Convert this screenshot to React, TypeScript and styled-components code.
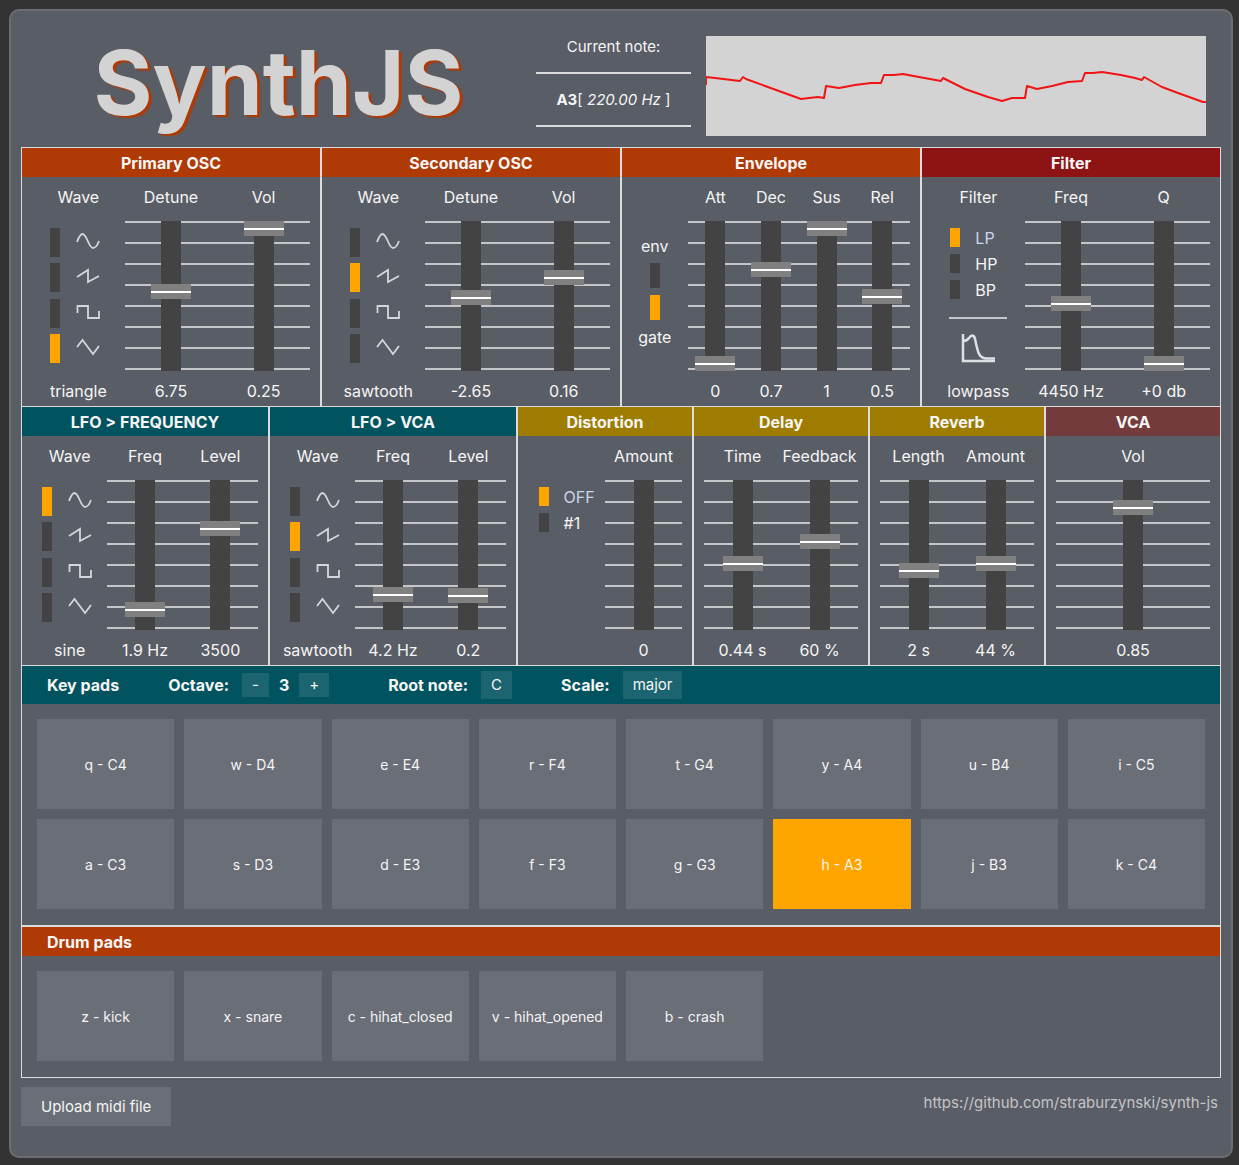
import React, { useId, useState } from "react";
import styled, { createGlobalStyle } from "styled-components";

const color = {
  page: "#333333",
  chassis: "#595d65",
  chassisEdge: "#6b6d70",
  line: "#dcdcdc",
  tick: "#c4c6c9",
  dark: "#434343",
  thumb: "#808080",
  lit: "#ffa500",
  pad: "#6a6e76",
  text: "#f5f5f5",
  muted: "#c3c4c6",
  litText: "#c9d6ec",
  orange: "#af3a05",
  red: "#8e1315",
  teal: "#00535f",
  tealButton: "#1c6570",
  gold: "#9e7c00",
  maroon: "#733b3b",
};

const GlobalStyle = createGlobalStyle`
  *, *::before, *::after { box-sizing: border-box; }
  body {
    margin: 0;
    background: ${color.page};
    color: ${color.text};
    font-family: Inter, "Noto Sans", sans-serif;
    font-size: 16px;
    line-height: 24px;
  }
  button {
    border: 0;
    margin: 0;
    font: inherit;
    color: inherit;
    cursor: pointer;
  }
`;

const Page = styled.div`
  padding: 9px 6px 7px 9px;
`;

const Chassis = styled.main`
  padding: 10px 10px 30px;
  background: ${color.chassis};
  border: 2px solid ${color.chassisEdge};
  border-radius: 10px;
`;

const TopBar = styled.header`
  display: grid;
  grid-template-columns: minmax(0, 1fr) 155px 500px;
  column-gap: 15px;
  height: 126px;
  padding-right: 15px;
`;

const Logo = styled.h1`
  margin: 0;
  padding: 12px 0 0 15px;
  text-align: center;
  font-size: 90px;
  font-weight: 700;
  line-height: 100px;
  color: lightgray;
  text-shadow: 3px 2px 1px ${color.orange};
`;

const NoteLine = styled.p`
  margin: 0;
  height: 53px;
  display: flex;
  align-items: center;
  justify-content: center;
  font-size: 15px;
  white-space: pre;
  border-bottom: 2px solid ${color.line};
`;

const Scope = styled.div`
  margin-top: 15px;
  height: 100px;
  background: lightgray;

  svg {
    display: block;
    width: 100%;
    height: 100%;
  }
`;

const PanelRow = styled.div<{ $columns: string }>`
  display: grid;
  grid-template-columns: ${(p) => p.$columns};
`;

const PanelBox = styled.section`
  min-width: 0;
  border: 1px solid ${color.line};
  border-bottom: 0;
`;

const PanelTitle = styled.h2<{ $tone: string }>`
  margin: 0;
  height: 29px;
  font-size: 16px;
  font-weight: 700;
  line-height: 31px;
  text-align: center;
  background: ${(p) => p.$tone};
`;

const PanelBody = styled.div<{ $columns: number }>`
  display: grid;
  grid-template-columns: repeat(${(p) => p.$columns}, minmax(0, 1fr));
  padding: 8px 10px 3px;
`;

const Column = styled.div`
  display: grid;
  grid-template-rows: 36px 158px 24px;
  white-space: nowrap;
`;

const Caption = styled.span`
  display: flex;
  justify-content: center;
`;

const Readout = styled.output`
  display: flex;
  justify-content: center;
`;

const Rails = styled.div`
  display: flex;
  justify-content: center;
  height: 150px;
  background: repeating-linear-gradient(
    to bottom,
    ${color.tick} 0 2px,
    transparent 2px 21px
  );
`;

const Fader = styled.input`
  appearance: none;
  writing-mode: vertical-lr;
  direction: rtl;
  width: 40px;
  height: 150px;
  margin: 0;
  background: linear-gradient(${color.dark}, ${color.dark}) center / 20px 100% no-repeat;

  &::-webkit-slider-thumb {
    appearance: none;
    width: 40px;
    height: 15px;
    border: 0;
    border-radius: 0;
    background: linear-gradient(
      ${color.thumb} 0 7px,
      #ffffff 7px 9px,
      ${color.thumb} 9px 15px
    );
  }

  &:disabled::-webkit-slider-thumb {
    visibility: hidden;
  }
`;

const Options = styled.div`
  display: flex;
  flex-direction: column;
  align-items: center;
  padding-top: 7px;
`;

const WaveList = styled.div`
  display: flex;
  flex-direction: column;
  justify-content: space-between;
  width: 56px;
  height: 135px;
`;

const WaveOption = styled.label`
  display: flex;
  justify-content: space-between;
`;

const Led = styled.input<{ $height: number }>`
  appearance: none;
  flex: none;
  width: 10px;
  height: ${(p) => p.$height}px;
  margin: 0;
  background: ${color.dark};

  &:checked {
    background: ${color.lit};
  }
`;

const WaveIcon = styled.svg`
  width: 36px;
  height: 29px;
  fill: none;
  stroke: #d4d6da;
  stroke-width: 1.8;
`;

const TextList = styled.div`
  display: flex;
  flex-direction: column;
  gap: 7px;
  width: 56px;
`;

const TextOption = styled.label`
  display: flex;
  gap: 15px;
  height: 19px;
  line-height: 20px;

  &:has(:checked) {
    color: ${color.litText};
  }
`;

const Divider = styled.hr`
  width: 58px;
  height: 2px;
  margin: 18px 0 15px;
  border: 0;
  background: ${color.tick};
`;

const CurveIcon = styled.svg`
  width: 34px;
  height: 29px;
  fill: none;
  stroke: #dee0e3;
`;

const GateSwitch = styled.div`
  display: flex;
  flex-direction: column;
  align-items: center;
  justify-content: center;
  gap: 7px;
  height: 140px;
  padding-right: 10px;
  line-height: 20px;

  label {
    display: flex;
    flex-direction: column;
    align-items: center;
    gap: 7px;
  }
`;

const PadSection = styled.section`
  border: 1px solid ${color.line};
`;

const PadBar = styled.div<{ $tone: string; $height: number }>`
  display: flex;
  align-items: center;
  gap: 49px;
  height: ${(p) => p.$height}px;
  padding: 0 25px;
  font-weight: 700;
  background: ${(p) => p.$tone};
`;

const PadBarTitle = styled.h2`
  margin: 0;
  font-size: 16px;
  font-weight: 700;
`;

const Setting = styled.div`
  display: flex;
  align-items: center;
  gap: 13px;
`;

const Stepper = styled.div`
  display: flex;
  align-items: center;
  gap: 10px;
  padding-right: 10px;
`;

const BarButton = styled.button<{ $small?: boolean }>`
  padding: 0 10px;
  height: ${(p) => (p.$small ? 24 : 28)}px;
  font-size: 15px;
  font-weight: 400;
  background: ${color.tealButton};
`;

const PadGrid = styled.div`
  display: grid;
  grid-template-columns: repeat(8, minmax(0, 1fr));
  gap: 10px;
  padding: 15px 15px 16px;
`;

const Pad = styled.button<{ $on?: boolean }>`
  height: 90px;
  padding: 2px 0 0;
  font-size: 14px;
  background: ${(p) => (p.$on ? color.lit : color.pad)};
`;

const Footer = styled.footer`
  display: flex;
  justify-content: space-between;
  align-items: flex-start;
  padding-top: 9px;
  font-size: 15px;
`;

const UploadButton = styled.button`
  height: 39px;
  padding: 0 20px;
  background: ${color.pad};
`;

const RepoLink = styled.a`
  padding: 4px 3px 0 0;
  color: ${color.muted};
  text-decoration: none;
`;

type SliderProps = {
  label: string;
  min?: number;
  max?: number;
  start: number;
  format?: (value: number) => string;
  disabled?: boolean;
};

function Slider({ label, min = 0, max = 1, start, format = String, disabled }: SliderProps) {
  const id = useId();
  const [value, setValue] = useState(start);
  return (
    <Column>
      <Caption as="label" htmlFor={id}>{label}</Caption>
      <Rails>
        <Fader
          id={id}
          type="range"
          min={min}
          max={max}
          step={(max - min) / 10000}
          value={value}
          disabled={disabled}
          onChange={(e) => setValue(Number(e.target.value))}
        />
      </Rails>
      <Readout htmlFor={id}>{format(value)}</Readout>
    </Column>
  );
}

const waves = [
  { name: "sine", path: "M7 14C8.500 10 10.500 6 12.500 6C17 6 18.500 20 23 20C25.500 20 27.500 17 29 13" },
  { name: "sawtooth", path: "M7 14L18 7V19L29 13" },
  { name: "square", path: "M7.500 14V7H18V19H29V12" },
  { name: "triangle", path: "M7 13L12.500 6L23 20L29 12" },
];

function WavePicker({ start }: { start: string }) {
  const group = useId();
  const [wave, setWave] = useState(start);
  return (
    <Column role="radiogroup" aria-label="Wave">
      <Caption>Wave</Caption>
      <Options>
        <WaveList>
          {waves.map((w) => (
            <WaveOption key={w.name}>
              <Led
                $height={29}
                type="radio"
                name={group}
                aria-label={w.name}
                checked={wave === w.name}
                onChange={() => setWave(w.name)}
              />
              <WaveIcon viewBox="0 0 36 29" aria-hidden="true">
                <path d={w.path} />
              </WaveIcon>
            </WaveOption>
          ))}
        </WaveList>
      </Options>
      <Readout>{wave}</Readout>
    </Column>
  );
}

function TextRadios({ options, value, onPick }: { options: string[]; value: string; onPick: (v: string) => void }) {
  const group = useId();
  return (
    <TextList>
      {options.map((o) => (
        <TextOption key={o}>
          <Led $height={19} type="radio" name={group} checked={value === o} onChange={() => onPick(o)} />
          {o}
        </TextOption>
      ))}
    </TextList>
  );
}

const filterNames: Record<string, string> = { LP: "lowpass", HP: "highpass", BP: "bandpass" };

function FilterPicker() {
  const [kind, setKind] = useState("LP");
  return (
    <Column role="radiogroup" aria-label="Filter type">
      <Caption>Filter</Caption>
      <Options>
        <TextRadios options={["LP", "HP", "BP"]} value={kind} onPick={setKind} />
        <Divider />
        <CurveIcon viewBox="0 0 34 29" aria-hidden="true">
          <path strokeWidth="2.500" d="M2 0V27H34" />
          <path strokeWidth="2.500" d="M2 7Q6 7 8 4C11 0 13.500 1 14.500 7C17 19 18 24.500 26 24.500H34" />
        </CurveIcon>
      </Options>
      <Readout>{filterNames[kind]}</Readout>
    </Column>
  );
}

function DistortionPicker() {
  const [kind, setKind] = useState("OFF");
  return (
    <Column role="radiogroup" aria-label="Distortion type">
      <Caption />
      <Options>
        <TextRadios options={["OFF", "#1"]} value={kind} onPick={setKind} />
      </Options>
    </Column>
  );
}

function GatePicker() {
  const group = useId();
  const [mode, setMode] = useState("gate");
  return (
    <Column role="radiogroup" aria-label="Trigger mode">
      <Caption />
      <GateSwitch>
        <label>
          env
          <Led $height={25} type="radio" name={group} checked={mode === "env"} onChange={() => setMode("env")} />
        </label>
        <label>
          <Led $height={25} type="radio" name={group} checked={mode === "gate"} onChange={() => setMode("gate")} />
          gate
        </label>
      </GateSwitch>
    </Column>
  );
}

function Panel({ title, tone, columns, children }: { title: string; tone: string; columns: number; children: React.ReactNode }) {
  return (
    <PanelBox>
      <PanelTitle $tone={tone}>{title}</PanelTitle>
      <PanelBody $columns={columns}>{children}</PanelBody>
    </PanelBox>
  );
}

const round = (digits: number, unit = "") => (v: number) => `${Number(v.toFixed(digits))}${unit}`;
const percent = (v: number) => `${Math.round(v)} %`;

const tracePoints =
  "0,49 0,41 9,42 34,45 37,41 40,43 95,63 103,62 112,61 118,62 120,50 133,52 149,49 165,47 175,47 178,39 188,39 197,38 213,41 235,45 237,42 243,45 259,53 282,61 296,65 306,62 319,62 321,50 331,53 346,50 362,46 376,45 379,37 387,37 396,36 415,39 429,42 436,44 438,41 456,51 472,57 497,66 500,66";

const keys = ["q - C4", "w - D4", "e - E4", "r - F4", "t - G4", "y - A4", "u - B4", "i - C5",
  "a - C3", "s - D3", "d - E3", "f - F3", "g - G3", "h - A3", "j - B3", "k - C4"];
const drums = ["z - kick", "x - snare", "c - hihat_closed", "v - hihat_opened", "b - crash"];
const roots = ["C", "D", "E", "F", "G", "A", "B"];
const scales = ["major", "minor"];

const next = (list: string[], item: string) => list[(list.indexOf(item) + 1) % list.length];

export default function App() {
  const [octave, setOctave] = useState(3);
  const [root, setRoot] = useState("C");
  const [scale, setScale] = useState("major");
  const [held, setHeld] = useState("h - A3");

  return (
    <Page>
      <GlobalStyle />
      <Chassis>
        <TopBar>
          <Logo>SynthJS</Logo>
          <div>
            <NoteLine>Current note:</NoteLine>
            <NoteLine><strong>A3</strong>[ <em>220.00 Hz</em> ]</NoteLine>
          </div>
          <Scope>
            <svg viewBox="0 0 500 100" preserveAspectRatio="none" role="img" aria-label="Waveform">
              <polyline points={tracePoints} fill="none" stroke="#f01414" strokeWidth="2" strokeLinejoin="round" />
            </svg>
          </Scope>
        </TopBar>

        <PanelRow $columns="repeat(4, minmax(0, 1fr))">
          <Panel title="Primary OSC" tone={color.orange} columns={3}>
            <WavePicker start="triangle" />
            <Slider label="Detune" min={-100} max={100} start={6.75} format={round(2)} />
            <Slider label="Vol" max={0.25} start={0.25} format={round(2)} />
          </Panel>
          <Panel title="Secondary OSC" tone={color.orange} columns={3}>
            <WavePicker start="sawtooth" />
            <Slider label="Detune" min={-100} max={100} start={-2.65} format={round(2)} />
            <Slider label="Vol" max={0.25} start={0.16} format={round(2)} />
          </Panel>
          <Panel title="Envelope" tone={color.orange} columns={5}>
            <GatePicker />
            <Slider label="Att" start={0} format={round(2)} />
            <Slider label="Dec" start={0.7} format={round(2)} />
            <Slider label="Sus" start={1} format={round(2)} />
            <Slider label="Rel" start={0.5} format={round(2)} />
          </Panel>
          <Panel title="Filter" tone={color.red} columns={3}>
            <FilterPicker />
            <Slider label="Freq" max={10000} start={4450} format={round(0, " Hz")} />
            <Slider label="Q" max={30} start={0} format={(v) => `+${Math.round(v)} db`} />
          </Panel>
        </PanelRow>

        <PanelRow $columns="repeat(2, minmax(0, 248fr)) repeat(4, minmax(0, 176fr))">
          <Panel title="LFO > FREQUENCY" tone={color.teal} columns={3}>
            <WavePicker start="sine" />
            <Slider label="Freq" max={20} start={1.9} format={round(1, " Hz")} />
            <Slider label="Level" max={5000} start={3500} format={round(0)} />
          </Panel>
          <Panel title="LFO > VCA" tone={color.teal} columns={3}>
            <WavePicker start="sawtooth" />
            <Slider label="Freq" max={20} start={4.2} format={round(1, " Hz")} />
            <Slider label="Level" start={0.2} format={round(2)} />
          </Panel>
          <Panel title="Distortion" tone={color.gold} columns={2}>
            <DistortionPicker />
            <Slider label="Amount" start={0} disabled />
          </Panel>
          <Panel title="Delay" tone={color.gold} columns={2}>
            <Slider label="Time" start={0.44} format={round(2, " s")} />
            <Slider label="Feedback" max={100} start={60} format={percent} />
          </Panel>
          <Panel title="Reverb" tone={color.gold} columns={2}>
            <Slider label="Length" min={0.1} max={5} start={2} format={round(1, " s")} />
            <Slider label="Amount" max={100} start={44} format={percent} />
          </Panel>
          <Panel title="VCA" tone={color.maroon} columns={1}>
            <Slider label="Vol" start={0.85} format={round(2)} />
          </Panel>
        </PanelRow>

        <PadSection>
          <PadBar $tone={color.teal} $height={38}>
            <PadBarTitle>Key pads</PadBarTitle>
            <Setting>
              Octave:
              <Stepper>
                <BarButton $small aria-label="Octave down" onClick={() => setOctave(octave - 1)}>-</BarButton>
                {octave}
                <BarButton $small aria-label="Octave up" onClick={() => setOctave(octave + 1)}>+</BarButton>
              </Stepper>
            </Setting>
            <Setting>
              Root note:
              <BarButton onClick={() => setRoot(next(roots, root))}>{root}</BarButton>
            </Setting>
            <Setting>
              Scale:
              <BarButton onClick={() => setScale(next(scales, scale))}>{scale}</BarButton>
            </Setting>
          </PadBar>
          <PadGrid>
            {keys.map((k) => (
              <Pad key={k} $on={k === held} onClick={() => setHeld(k)}>{k}</Pad>
            ))}
          </PadGrid>
        </PadSection>

        <PadSection>
          <PadBar $tone={color.orange} $height={29}>
            <PadBarTitle>Drum pads</PadBarTitle>
          </PadBar>
          <PadGrid>
            {drums.map((d) => (
              <Pad key={d}>{d}</Pad>
            ))}
          </PadGrid>
        </PadSection>

        <Footer>
          <UploadButton>Upload midi file</UploadButton>
          <RepoLink href="https://github.com/straburzynski/synth-js">
            https://github.com/straburzynski/synth-js
          </RepoLink>
        </Footer>
      </Chassis>
    </Page>
  );
}
